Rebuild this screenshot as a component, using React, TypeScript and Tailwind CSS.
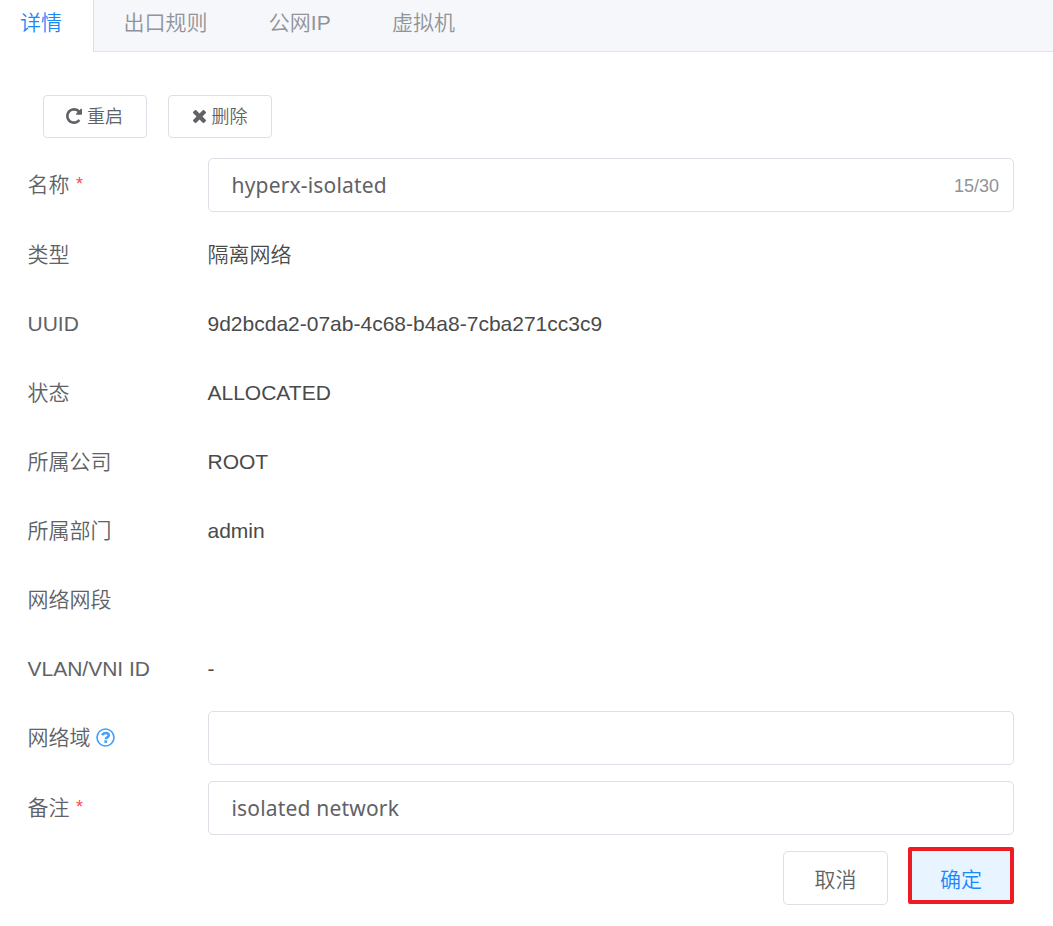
import React from "react";

const tabs = ["出口规则", "公网IP", "虚拟机"];

const details = [
  { label: "类型", value: "隔离网络" },
  { label: "UUID", value: "9d2bcda2-07ab-4c68-b4a8-7cba271cc3c9" },
  { label: "状态", value: "ALLOCATED" },
  { label: "所属公司", value: "ROOT" },
  { label: "所属部门", value: "admin" },
  { label: "网络网段", value: "" },
  { label: "VLAN/VNI ID", value: "-" },
];

const inputClass =
  "h-[54px] w-full rounded-[5px] border border-[#dcdfe6] bg-white px-[23px] font-['Noto_Sans','Noto_Sans_CJK_SC',sans-serif] text-[21px] font-normal tracking-[0.18px] text-[#606266] outline-none";

function RestartIcon() {
  return (
    <svg viewBox="128 128 1536 1536" className="-mt-px -ml-px size-4 shrink-0" fill="currentColor">
      <path d="M1664 256v448q0 26-19 45t-45 19h-448q-42 0-59-40-17-39 14-69l138-138q-148-137-349-137-104 0-198.5 40.5t-163.5 109.5-109.5 163.5-40.5 198.5 40.5 198.5 109.5 163.5 163.5 109.5 198.5 40.5q119 0 225-52t179-147q7-10 23-12 15 0 25 9l137 138q9 8 9.5 20.5t-7.5 22.5q-109 132-264 204.5t-327 72.5q-156 0-298-61t-245-164-164-245-61-298 61-298 164-245 245-164 298-61q147 0 284.5 55.5t244.5 156.5l130-129q29-31 70-14 39 17 39 59z" />
    </svg>
  );
}

function RemoveIcon() {
  return (
    <svg viewBox="302 366 1188 1188" className="size-[13px] shrink-0" fill="currentColor">
      <path d="M1490 1322q0 40-28 68l-136 136q-28 28-68 28t-68-28l-294-294-294 294q-28 28-68 28t-68-28l-136-136q-28-28-28-68t28-68l294-294-294-294q-28-28-28-68t28-68l136-136q28-28 68-28t68 28l294 294 294-294q28-28 68-28t68 28l136 136q28 28 28 68t-28 68l-294 294 294 294q28 28 28 68z" />
    </svg>
  );
}

function HelpIcon() {
  return (
    <svg viewBox="0 0 19 19" className="-mt-px ml-[5px] size-[19px] shrink-0 text-[#409eff]">
      <g fill="none" stroke="currentColor">
        <circle cx="9.5" cy="9.5" r="8.5" strokeWidth="1.6" />
        <path d="M6 7.200C6.900 5.600 8 4.900 9.600 4.900c1.900 0 3.200 1.100 3.200 2.400 0 2.100-3 2-3 4" strokeWidth="2.500" />
      </g>
      <path fill="currentColor" d="M8.400 12.300h2.700v2.600H8.400z" />
    </svg>
  );
}

function Label({ children }: { children: React.ReactNode }) {
  return <div className="flex w-[180px] shrink-0 items-center">{children}</div>;
}

function Required() {
  return <span className="-mt-[3px] ml-[6.5px] text-[18px] leading-none text-[#ff4949]">*</span>;
}

export default function App() {
  return (
    <div className="h-[926px] bg-white font-['Liberation_Sans','Noto_Sans_CJK_SC',sans-serif] text-[21px] font-[350] text-[#606266]">
      <nav className="flex h-[52px] border-b border-[#dfe4ed] bg-[#f5f7fa] leading-[30px] text-[#909399]">
        <div className="h-[52px] w-[94px] border-r border-[#dcdfe6] bg-white pt-[8px] pl-5 text-[#1989fa]">
          详情
        </div>
        <div className="flex gap-[61.3px] pt-[8px] pl-[29.5px]">
          {tabs.map((tab) => (
            <div key={tab}>{tab}</div>
          ))}
        </div>
      </nav>

      <div className="flex gap-[21px] pt-[43px] pl-[43px] text-[18px]">
        <button className="flex h-[43px] w-[104px] items-center justify-center gap-[5px] rounded-[4px] border border-[#dcdfe6]">
          <RestartIcon />
          <span className="pt-[2px]">重启</span>
        </button>
        <button className="flex h-[43px] w-[104px] items-center justify-center gap-[6px] rounded-[4px] border border-[#dcdfe6]">
          <RemoveIcon />
          <span className="pt-[2px]">删除</span>
        </button>
      </div>

      <div className="pt-5 pr-[39px] pl-[27.5px]">
        <div className="flex h-[54px] items-center">
          <Label>
            名称
            <Required />
          </Label>
          <div className="relative flex-1">
            <input className={inputClass} defaultValue="hyperx-isolated" maxLength={30} />
            <span className="absolute top-px right-[15px] text-[18px] leading-[54px] text-[#909399]">15/30</span>
          </div>
        </div>

        <div className="pt-2">
          {details.map((row) => (
            <div key={row.label} className="flex h-[69px] items-center">
              <Label>{row.label}</Label>
              <div className="text-[#4a4a4a]">{row.value}</div>
            </div>
          ))}
        </div>

        <div className="mt-[8px] flex h-[54px] items-center">
          <Label>
            网络域
            <HelpIcon />
          </Label>
          <input className={inputClass} />
        </div>

        <div className="mt-4 flex h-[54px] items-center">
          <Label>
            备注
            <Required />
          </Label>
          <input className={inputClass} defaultValue="isolated network" />
        </div>

        <div className="flex justify-end gap-5 pt-[12px]">
          <button className="mt-[4px] h-[54px] w-[105px] rounded-[5px] border border-[#dcdfe6] pt-[3px]">取消</button>
          <button className="h-[57px] w-[106px] rounded-[2px] border-4 border-[#ed1c24] bg-[#e8f4ff] pt-[8px] text-[#1989fa]">
            确定
          </button>
        </div>
      </div>
    </div>
  );
}
